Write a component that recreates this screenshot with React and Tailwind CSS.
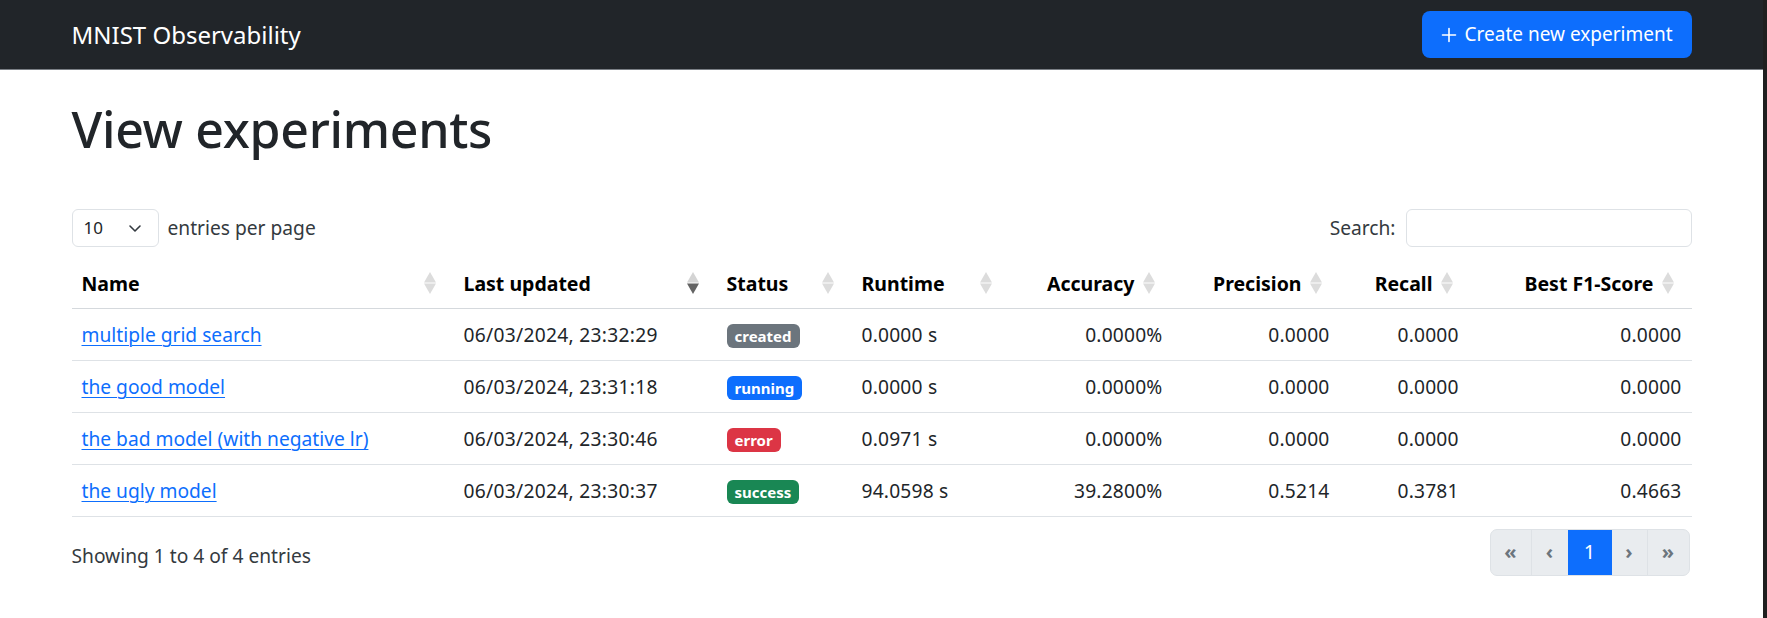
import React from 'react';

const rows = [
  { name: 'multiple grid search', updated: '06/03/2024, 23:32:29', status: 'created', runtime: '0.0000 s', accuracy: '0.0000%', precision: '0.0000', recall: '0.0000', f1: '0.0000' },
  { name: 'the good model', updated: '06/03/2024, 23:31:18', status: 'running', runtime: '0.0000 s', accuracy: '0.0000%', precision: '0.0000', recall: '0.0000', f1: '0.0000' },
  { name: 'the bad model (with negative lr)', updated: '06/03/2024, 23:30:46', status: 'error', runtime: '0.0971 s', accuracy: '0.0000%', precision: '0.0000', recall: '0.0000', f1: '0.0000' },
  { name: 'the ugly model', updated: '06/03/2024, 23:30:37', status: 'success', runtime: '94.0598 s', accuracy: '39.2800%', precision: '0.5214', recall: '0.3781', f1: '0.4663' },
];

const badgeColor = {
  created: 'bg-[#6c757d]',
  running: 'bg-[#0d6efd]',
  error: 'bg-[#dc3545]',
  success: 'bg-[#198754]',
};

const columns = [
  { label: 'Name', width: 'w-[382px]', right: false },
  { label: 'Last updated', width: 'w-[263px]', right: false, sorted: true },
  { label: 'Status', width: 'w-[135px]', right: false },
  { label: 'Runtime', width: 'w-[158px]', right: false },
  { label: 'Accuracy', width: 'w-[163px]', right: true },
  { label: 'Precision', width: 'w-[167px]', right: true },
  { label: 'Recall', width: 'w-[131px]', right: true },
  { label: 'Best F1-Score', width: 'w-[221px]', right: true },
];

function SortIcon({ sorted }) {
  return (
    <svg width="12" height="22" viewBox="0 0 12 22" className="shrink-0">
      <polygon points="6,0 12,10.5 0,10.5" fill={sorted ? '#d4d4d4' : '#dcdcdc'} />
      <polygon points="0,11.5 12,11.5 6,22" fill={sorted ? '#636363' : '#dcdcdc'} />
    </svg>
  );
}

export default function App() {
  return (
    <div className="flex w-full min-h-[618px] bg-white text-[#212529]" style={{ fontFamily: '"Noto Sans", "Open Sans", sans-serif' }}>
      <div className="flex-1 flex flex-col min-w-0">
        {/* navbar */}
        <div className="bg-[#212529] border-b border-[#7a7f85] h-[70px]">
          <div className="w-[1620px] mx-auto h-full flex items-center justify-between">
            <span className="text-white text-[24px] leading-none">MNIST Observability</span>
            <button className="h-[47px] px-[19px] rounded-[8px] bg-[#0d6efd] text-white text-[19px] flex items-center gap-[8px]">
              <svg width="16" height="16" viewBox="0 0 16 16" fill="none" stroke="currentColor" strokeWidth="1.6" strokeLinecap="round">
                <path d="M8 1.5v13M1.5 8h13" />
              </svg>
              Create new experiment
            </button>
          </div>
        </div>

        <div className="w-[1620px] mx-auto">
          <h1 className="text-[50px] font-medium leading-[1.2] mt-[29px] tracking-[-0.3px]">View experiments</h1>

          {/* controls */}
          <div className="flex items-center justify-between mt-[50px]">
            <div className="flex items-center gap-[9px]">
              <div className="w-[87px] h-[38px] border border-[#dee2e6] rounded-[6px] flex items-center justify-between pl-[11px] pr-[16px] text-[17px]">
                <span>10</span>
                <svg width="14" height="10" viewBox="0 0 14 10" fill="none" stroke="#343a40" strokeWidth="1.6" strokeLinecap="round" strokeLinejoin="round">
                  <path d="M2 3l5 5 5-5" />
                </svg>
              </div>
              <span className="text-[19.2px] text-[#343a40]">entries per page</span>
            </div>
            <div className="flex items-center gap-[10px]">
              <span className="text-[19.2px] text-[#343a40]">Search:</span>
              <div className="w-[286px] h-[38px] border border-[#dee2e6] rounded-[6px]" />
            </div>
          </div>

          {/* table */}
          <table className="w-full table-fixed border-collapse mt-[12px]">
            <colgroup>
              {columns.map((c) => (
                <col key={c.label} className={c.width} />
              ))}
            </colgroup>
            <thead>
              <tr className="border-b border-[#d5d9dd]">
                {columns.map((c) => (
                  <th key={c.label} className="h-[49px] p-0 font-bold text-[19.5px] text-black">
                    <div className={`flex items-center pl-[10px] pr-[18px] ${c.right ? 'justify-end gap-[8px]' : 'justify-between'}`}>
                      <span>{c.label}</span>
                      <SortIcon sorted={c.sorted} />
                    </div>
                  </th>
                ))}
              </tr>
            </thead>
            <tbody className="text-[19.2px] text-[#212529]">
              {rows.map((r) => (
                <tr key={r.name} className="border-b border-[#dee2e6] h-[52px]">
                  <td className="px-[10px] pt-[3px]">
                    <a href="#" className="text-[#0d6efd] underline underline-offset-[3px] decoration-1">{r.name}</a>
                  </td>
                  <td className="px-[10px] pt-[3px] tracking-[0.3px]">{r.updated}</td>
                  <td className="px-[10px] pt-[3px]">
                    <span className={`inline-flex items-center h-[24px] px-[8px] rounded-[6px] text-white text-[15px] font-bold ${badgeColor[r.status]}`}>
                      {r.status}
                    </span>
                  </td>
                  <td className="px-[10px] pt-[3px] tracking-[0.2px]">{r.runtime}</td>
                  <td className="px-[10px] pt-[3px] text-right tracking-[0.2px]">{r.accuracy}</td>
                  <td className="px-[10px] pt-[3px] text-right tracking-[0.2px]">{r.precision}</td>
                  <td className="pl-[58px] pr-[10px] pt-[3px] tracking-[0.2px]">{r.recall}</td>
                  <td className="px-[10px] pt-[3px] text-right tracking-[0.2px]">{r.f1}</td>
                </tr>
              ))}
            </tbody>
          </table>

          {/* footer */}
          <div className="flex items-center justify-between mt-[12px]">
            <span className="text-[19.2px] text-[#343a40] pt-[9px]">Showing 1 to 4 of 4 entries</span>
            <div className="flex h-[47px] border border-[#dee2e6] rounded-[7px] overflow-hidden bg-[#e9ecef] text-[#6c757d] text-[20px] font-bold mr-[2px]">
              <span className="w-[41px] flex items-center justify-center border-r border-[#dee2e6]">«</span>
              <span className="w-[36px] flex items-center justify-center">‹</span>
              <span className="w-[44px] flex items-center justify-center bg-[#0d6efd] text-white text-[20px] font-normal">1</span>
              <span className="w-[36px] flex items-center justify-center border-r border-[#dee2e6]">›</span>
              <span className="w-[41px] flex items-center justify-center">»</span>
            </div>
          </div>
        </div>
      </div>
      <div className="w-[4px] bg-[#1f1f1f]" />
    </div>
  );
}
